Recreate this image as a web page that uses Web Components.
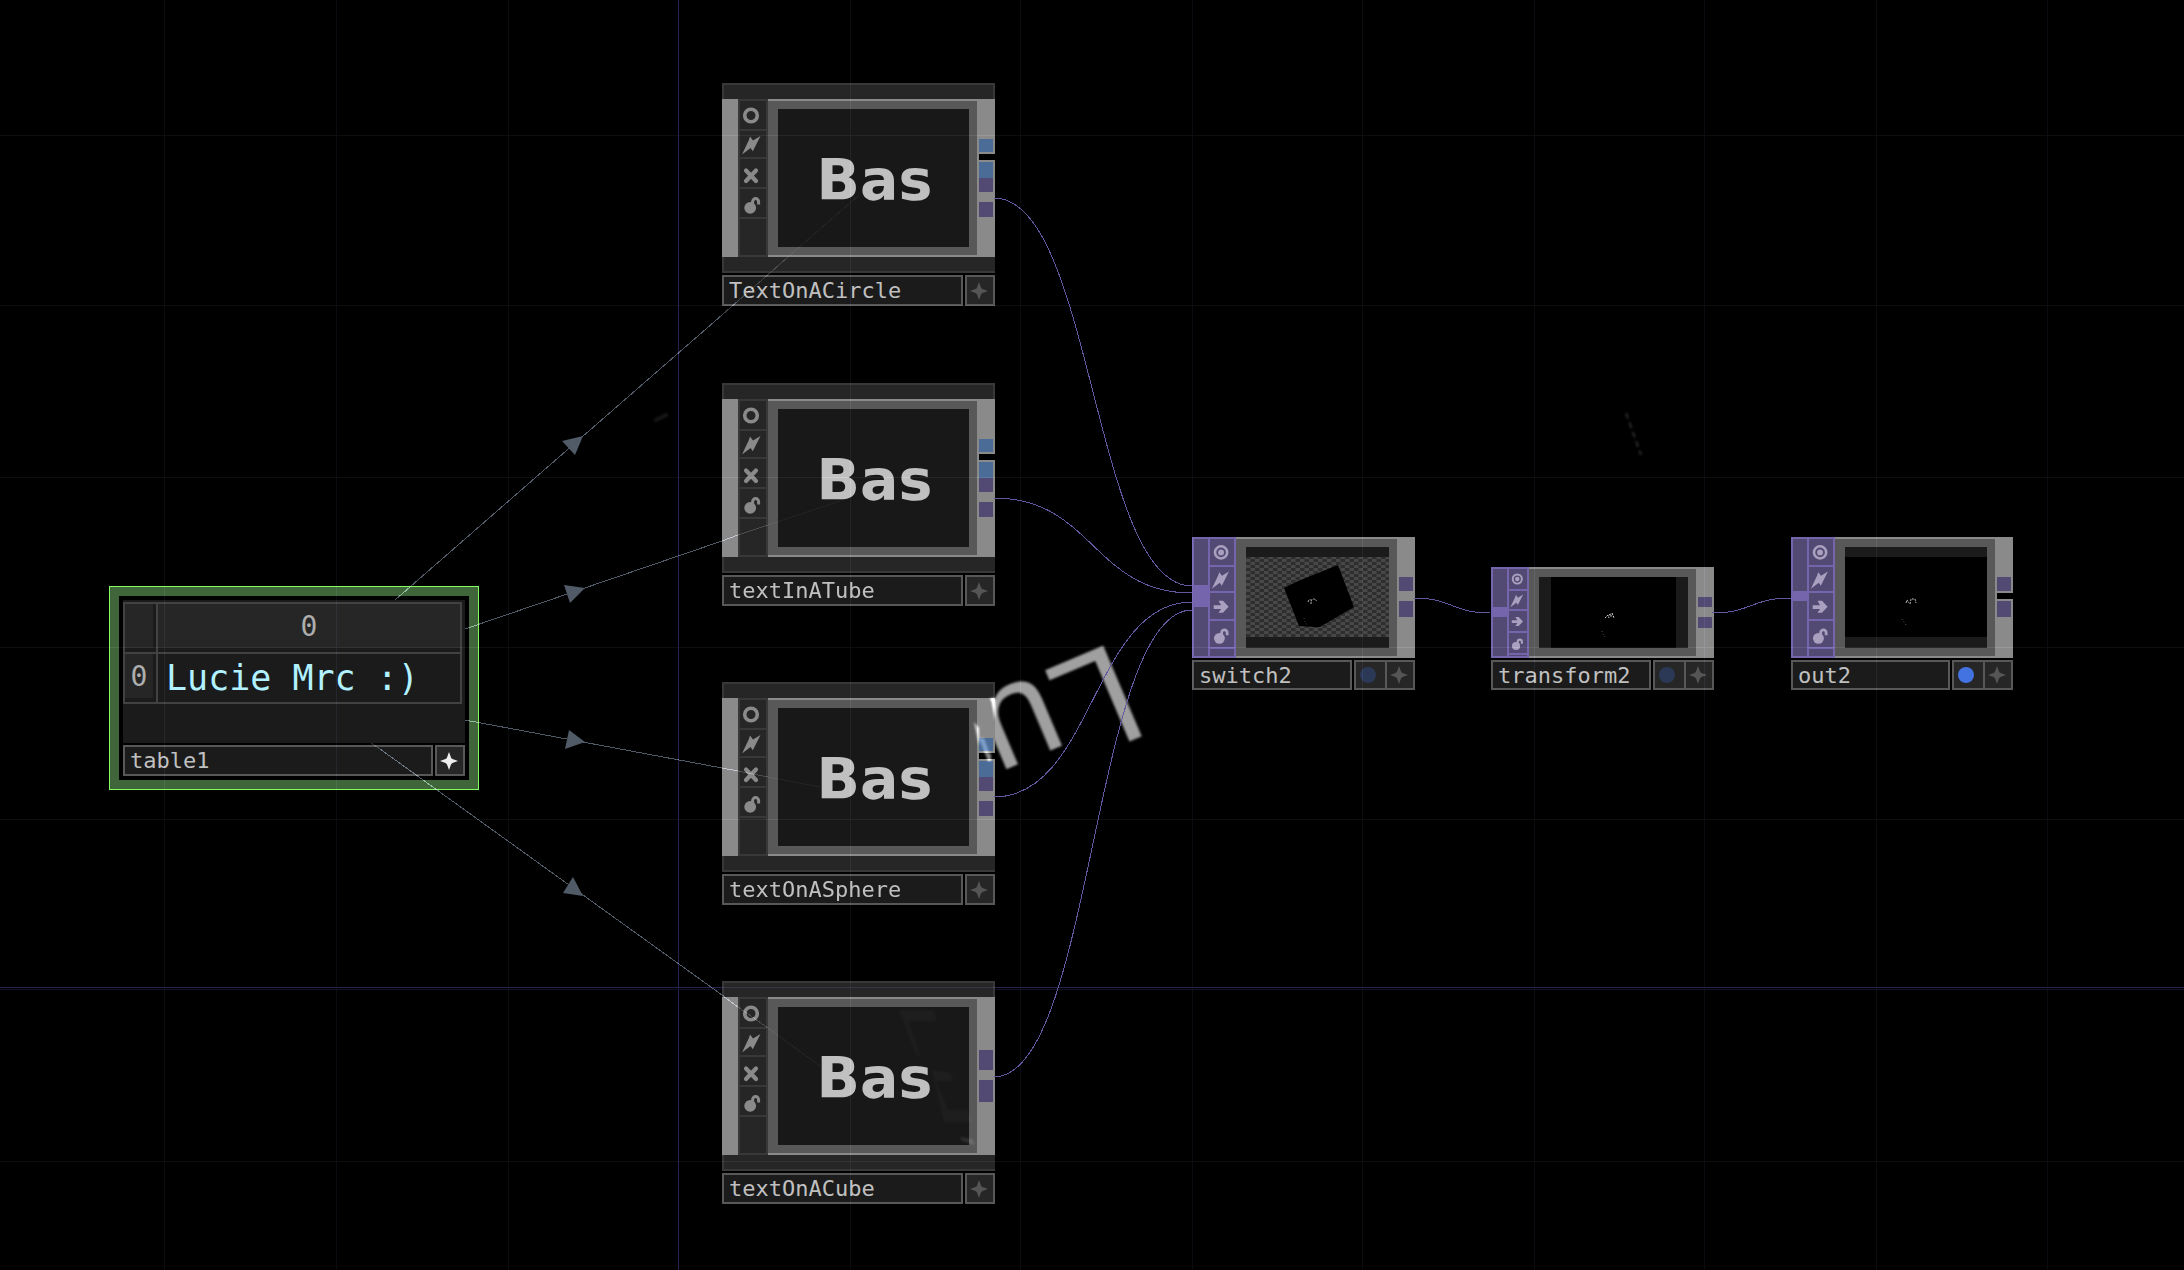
<!DOCTYPE html>
<html lang="en">
<head>
<meta charset="utf-8">
<title>Network</title>
<style>
  html, body { margin: 0; background: #000; }
  body { font-family: "DejaVu Sans Mono", monospace; color: #c0c0c0; }
</style>
</head>
<body>
<network-graph></network-graph>
<script>
const ICONS = {
  ring: '<circle cx="11" cy="14.5" r="6.3" fill="none" stroke="currentColor" stroke-width="3.6"/>',
  target: '<circle cx="12" cy="14.5" r="6.6" fill="none" stroke="currentColor" stroke-width="2.8"/><circle cx="12" cy="14.5" r="3.2" fill="currentColor"/>',
  bolt: '<path d="M20.5 5 12.8 20.2 10.6 17 2 23.6 8.8 9.2 10 5.6 13 9.6z" fill="currentColor"/>',
  cross: '<path d="M6 11.5 16 22M16 11.5 6 22" stroke="currentColor" stroke-width="4.2" stroke-linecap="round"/>',
  arrow: '<path d="M4 13.2H12L9.2 8.5H14L20.2 15 14 21.5H9.2L12 17.2H4z" fill="currentColor"/>',
  lock: '<circle cx="10.2" cy="18.8" r="5.9" fill="currentColor"/><path d="M12.6 14.5V12.6a3 3 0 0 1 6 0V15.5" fill="none" stroke="currentColor" stroke-width="3"/>'
};

class FlagColumn extends HTMLElement {
  connectedCallback() {
    const cells = this.getAttribute('cells').split(' ').map(c => c.split(':'));
    this.attachShadow({ mode: 'open' }).innerHTML = `
      <style>
        :host { display: flex; flex-direction: column; gap: 2px; padding: 2px;
          background: var(--line); box-sizing: border-box; }
        button, div { border: 0; padding: 0; margin: 0; background: var(--fill); color: var(--ink); display: block; width: 100%; }
        button { display: flex; align-items: flex-start; overflow: hidden; }
        div { flex: 1; }
        svg { display: block; width: 100%; flex: none; }
      </style>
      ${cells.map(([n, h]) => `<button style="height:${h}px" aria-label="${n}"><svg viewBox="0 0 26 28">${ICONS[n]}</svg></button>`).join('')}
      <div></div>`;
  }
}
customElements.define('flag-column', FlagColumn);

/* A strip of connector slots, listed top to bottom as height:kind. */
class PortStrip extends HTMLElement {
  connectedCallback() {
    const parts = this.getAttribute('slots').split(' ').map(c => c.split(':'));
    this.attachShadow({ mode: 'open' }).innerHTML = `
      <style>
        :host { display: flex; flex-direction: column; box-sizing: border-box; padding-left: 2px; }
        i { display: block; margin-right: var(--edge, 2px); }
        .top { background: #4a6c96; } .tex { background: #524a72; }
        .cut { background: #000; margin-right: 0; }
      </style>
      ${parts.map(([h, k]) => `<i class="${k}" style="height:${h}px"></i>`).join('')}`;
  }
}
customElements.define('port-strip', PortStrip);

class NameBar extends HTMLElement {
  connectedCallback() {
    const dot = this.getAttribute('dot');
    this.attachShadow({ mode: 'open' }).innerHTML = `
      <style>
        :host { display: flex; gap: 2px; height: 30px; font-size: 22px; line-height: 27px; }
        .name { flex: 1; border: 2px solid #585858; background: #1b1b1b; padding-left: 5px; white-space: nowrap; }
        .flags { display: flex; gap: 2px; border: 2px solid #585858; background: #585858; }
        button { width: 26px; border: 0; padding: 0 2px 0 0; background: #262626; display: grid; place-items: center; color: var(--star, #555); }
        .view { width: 29px; padding-right: 6px; }
        .view::before { content: ""; width: 16px; height: 16px; border-radius: 50%; background: #2b3956; }
        .view.on::before { background: #4273e0; }
        svg { display: block; }
      </style>
      <span class="name"><slot></slot></span>
      <span class="flags">
        ${dot ? `<button class="view ${dot}" aria-label="display"></button>` : ''}
        <button aria-label="active"><svg width="18" height="18" viewBox="0 0 18 18"><path d="M9 0 11 5.5Q11.5 6.5 12.5 7L18 9 12.5 11Q11.5 11.5 11 12.5L9 18 7 12.5Q6.5 11.5 5.5 11L0 9 5.5 7Q6.5 6.5 7 5.5z" fill="currentColor"/></svg></button>
      </span>`;
  }
}
customElements.define('name-bar', NameBar);

class CompNode extends HTMLElement {
  connectedCallback() {
    this.attachShadow({ mode: 'open' }).innerHTML = `
      <style>
        :host { position: absolute; display: block; width: 273px; }
        .bar { height: 16px; box-sizing: border-box; background: #262626; border: 2px solid #383838; border-bottom: 0; }
        .bar.low { border: 0; border-left: 2px solid #383838; border-bottom: 2px solid #383838; }
        .body { display: flex; height: 158px; background: #8a8a8a; }
        flag-column { --line: #383838; --fill: #262626; --ink: #8a8a8a; width: 30px; margin-left: 16px; }
        .frame { flex: 1; display: flex; margin: 2px 0; padding: 8px 8px 8px 10px; background: #585858; }
        .screen { flex: 1; display: grid; place-items: center; padding: 4px 0 0 2px; background: #181818;
          font: bold 57px/60px "DejaVu Sans", sans-serif; color: #c0c0c0; }
        port-strip { width: 18px; }
        name-bar { height: 31px; margin-top: 2px; }
      </style>
      <div class="bar"></div>
      <div class="body">
        <flag-column cells="ring:28 bolt:26 cross:28 lock:28"></flag-column>
        <div class="frame"><div class="screen">Bas</div></div>
        <port-strip slots="${this.getAttribute('outs')}"></port-strip>
      </div>
      <div class="bar low"></div>
      <name-bar><slot></slot></name-bar>`;
  }
}
customElements.define('comp-node', CompNode);

class TopNode extends HTMLElement {
  connectedCallback() {
    this.attachShadow({ mode: 'open' }).innerHTML = `
      <style>
        :host { position: absolute; display: block; width: 223px; }
        .body { display: flex; background: #8a8a8a; }
        .in { width: 16px; --edge: 0px; background: #7465ad; }
        flag-column { --line: #7465ad; --fill: #524a72; --ink: #a9a0c0; width: var(--flags, 28px); }
        .frame { flex: 1; display: flex; margin: 2px 0; padding: 8px 8px 8px 10px; background: #585858; }
        .screen { flex: 1; display: flex; background: #1b1b1b; }
        ::slotted(svg) { display: block; width: 100%; height: 100%; }
        .out { width: 18px; }
        name-bar { margin-top: 2px; }
      </style>
      <div class="body" style="height:${this.getAttribute('rise')}px">
        <port-strip class="in" slots="${this.getAttribute('ins')}"></port-strip>
        <flag-column cells="${this.getAttribute('cells')}"></flag-column>
        <div class="frame"><div class="screen"><slot name="view"></slot></div></div>
        <port-strip class="out" slots="${this.getAttribute('outs')}"></port-strip>
      </div>
      <name-bar dot="${this.getAttribute('dot')}"><slot></slot></name-bar>`;
  }
}
customElements.define('top-node', TopNode);

class TableNode extends HTMLElement {
  connectedCallback() {
    this.attachShadow({ mode: 'open' }).innerHTML = `
      <style>
        :host { position: absolute; display: block; box-sizing: border-box; width: 370px;
          border: 1px solid #80ff5e; background: #41653a; padding: 9px; }
        .inner { background: #000; padding: 4px; }
        .panel { background: #1b1b1b; height: 141px; padding: 2px 3px 0 0; }
        table { width: 100%; border-collapse: collapse; table-layout: fixed; }
        col.idx { width: 33px; }
        th, td { border: 2px solid #424242; padding: 0; height: 48px; box-sizing: content-box; }
        th { font-weight: normal; font-size: 28px; line-height: 46px; color: #adadad; vertical-align: top; }
        th div { height: 44px; background: #262626; }
        .side div { margin-right: 3px; }
        td { font-size: 35px; line-height: 48px; color: #b2f1ff; padding-left: 8px; white-space: nowrap; }
        name-bar { --star: #eee; height: 31px; margin-top: 2px; }
      </style>
      <div class="inner">
        <div class="panel">
          <table>
            <colgroup><col class="idx"><col></colgroup>
            <tr><th class="side"><div></div></th><th scope="col"><div>0</div></th></tr>
            <tr><th class="side" scope="row"><div>0</div></th><td>Lucie Mrc :)</td></tr>
          </table>
        </div>
        <name-bar><slot></slot></name-bar>
      </div>`;
  }
}
customElements.define('table-node', TableNode);

class NetworkGraph extends HTMLElement {
  connectedCallback() {
    const cols = [164, 336, 508, 850, 1020, 1192, 1362, 1534, 1704, 1876, 2047];
    const rows = [135, 305, 477, 647, 819, 1161];
    const wire = (x1, y1, x2, y2) => {
      const m = (x1 + x2) / 2;
      return `<path d="M${x1} ${y1}C${m} ${y1} ${m} ${y2} ${x2} ${y2}"/>`;
    };
    this.attachShadow({ mode: 'open' }).innerHTML = `
      <style>
        :host { display: block; position: relative; width: 100%; min-height: 100vh; overflow: hidden; background: #000; }
        .layer { position: absolute; inset: 0; width: 100%; height: 100%; pointer-events: none; }
        .add { mix-blend-mode: plus-lighter; }
        .soft { filter: blur(1px); }
      </style>
      <svg class="layer">
        <g class="soft">
          <text transform="translate(1114 641) rotate(157)" font-family="Liberation Sans, sans-serif" font-size="143" fill="#a0a0a0">Lu</text>
          <path d="M656 420 666 415" stroke="#161616" stroke-width="4" stroke-linecap="round"/>
          <path d="M1626 413 1641 455" stroke="#2c2c2c" stroke-width="2" stroke-dasharray="6 4"/>
        </g>
      </svg>

      <table-node style="left:109px;top:586px">table1</table-node>
      <comp-node style="left:722px;top:83px" outs="40: 13:top 2: 6:cut 2: 16:top 14:tex 10: 15:tex">TextOnACircle</comp-node>
      <comp-node style="left:722px;top:383px" outs="40: 13:top 2: 6:cut 2: 16:top 14:tex 10: 15:tex">textInATube</comp-node>
      <comp-node style="left:722px;top:682px" outs="40: 13:top 2: 6:cut 2: 16:top 14:tex 10: 15:tex">textOnASphere</comp-node>
      <comp-node style="left:722px;top:981px" outs="53: 20:tex 10: 22:tex">textOnACube</comp-node>

      <top-node style="left:1192px;top:537px" rise="121" dot="off" ins="2: 46:tex 22: 49:tex"
        cells="target:26 bolt:24 arrow:26 lock:26" outs="40: 14:tex 10: 16:tex">switch2
        <svg slot="view" viewBox="0 0 143 101" preserveAspectRatio="none">
          <defs><pattern id="check" width="9" height="6" patternUnits="userSpaceOnUse">
            <rect width="9" height="6" fill="#2e2e2e"/><rect width="4.5" height="3" fill="#484848"/><rect x="4.5" y="3" width="4.5" height="3" fill="#484848"/>
          </pattern></defs>
          <rect y="10" width="143" height="80" fill="url(#check)"/>
          <path d="M38 41 52 34 92 18 108 60 74 80H69L53 79z"/>
          <path d="M62 55Q63 51 66 54M65 57Q65 51 68 52T70 54" fill="none" stroke="#bbb" stroke-width="1" stroke-dasharray="2 1"/>
          <path d="M58 71 59 75 61 78" fill="none" stroke="#444" stroke-dasharray="1 2"/>
        </svg>
      </top-node>
      <top-node style="left:1491px;top:567px;--flags:22px" rise="91" dot="off" ins="2: 38:tex 10: 39:tex"
        cells="target:20 bolt:18 arrow:20 lock:20" outs="30: 10:tex 10: 11:tex">transform2
        <svg slot="view" viewBox="0 0 149 71" preserveAspectRatio="none">
          <rect x="12" width="125" height="71"/>
          <path d="M66 41 69 38 70 41M70 38 72 37 72 40M73 36 75 41" fill="none" stroke="#ddd" stroke-dasharray="2 1"/>
          <path d="M63 54 64 57 66 60" fill="none" stroke="#555" stroke-dasharray="1 2"/>
        </svg>
      </top-node>
      <top-node style="left:1791px;top:537px;width:222px" rise="121" dot="on" ins="2: 52:tex 10: 55:tex"
        cells="target:26 bolt:24 arrow:26 lock:26" outs="40: 14:tex 2: 6:cut 2: 16:tex">out2
        <svg slot="view" viewBox="0 0 142 101" preserveAspectRatio="none">
          <rect y="10" width="142" height="80"/>
          <path d="M61 56 62 53 64 56M65 57 66 52 70 52 71 56" fill="none" stroke="#bbb" stroke-dasharray="2 1"/>
          <path d="M57 72 59 75 61 78" fill="none" stroke="#555" stroke-dasharray="1 2"/>
        </svg>
      </top-node>

      <svg class="layer add">
        <g shape-rendering="crispEdges">
          <g fill="#0b0b12">${cols.map(x => `<rect x="${x}" width="1" height="100%"/>`).join('')}</g>
          <g fill="#0e0e0e">${rows.map(y => `<rect y="${y}" width="100%" height="1"/>`).join('')}</g>
          <rect x="678" width="1" height="100%" fill="#26234e"/>
          <g fill="#26234e"><rect y="987" width="722" height="1"/><rect x="995" y="987" width="100%" height="1"/></g>
          <g fill="#121122"><rect y="989" width="722" height="1"/><rect x="995" y="989" width="100%" height="1"/><rect x="722" y="987" width="273" height="1"/></g>
        </g>
        <g class="soft">
          <path d="M990 698H995V720L992 702z" fill="#aaa"/>
          <path d="M974 722 979 728V746z" fill="#777"/>
          <path d="M979 738 984 738 992 760 986 756z" fill="#333"/>
          <path d="M984 751 991 754V761H988z" fill="#888"/>
          <path d="M899 1010H933L937 1021H908L922 1060 916 1054z M932 1070 950 1073 954 1081H936L948 1110H968L972 1122H944z" fill="#060606"/>
          <path d="M960 1137 972 1139 975 1145 962 1141z" fill="#161616"/>
        </g>
      </svg>
      <svg class="layer add">
        <g stroke="#505b67" shape-rendering="crispEdges">
          <path d="M395 600 722 315M465 629 722 541M465 720 722 768M380 749 722 995"/>
          <path stroke="#3a3f45" d="M722 315 738 301M722 541 738 535M722 768 738 771M722 995 738 1007"/>
          <path stroke="#262626" d="M738 301 788 257M738 535 768 525M738 771 768 777M738 1007 768 1028M371 743 380 749"/>
          <path stroke="#0b0b0b" d="M788 257 858 196M768 525 840 501M768 777 820 787M768 1028 820 1066"/>
        </g>
      </svg>
      <svg class="layer">
        <g fill="none" stroke="#6159a0" shape-rendering="crispEdges">
          ${wire(994, 198, 1192, 586)}${wire(994, 498, 1192, 593)}${wire(994, 797, 1192, 602)}${wire(994, 1077, 1192, 610)}
          ${wire(1414, 598, 1490, 613)}${wire(1712, 613, 1791, 598)}
        </g>
        <g fill="#505b67">
          <path d="M583 436 562 441 575 455z"/><path d="M585 588 564 585 570 603z"/>
          <path d="M585 742 569 730 565 749z"/><path d="M583 896 573 877 563 893z"/>
        </g>
      </svg>`;
  }
}
customElements.define('network-graph', NetworkGraph);
</script>
</body>
</html>
